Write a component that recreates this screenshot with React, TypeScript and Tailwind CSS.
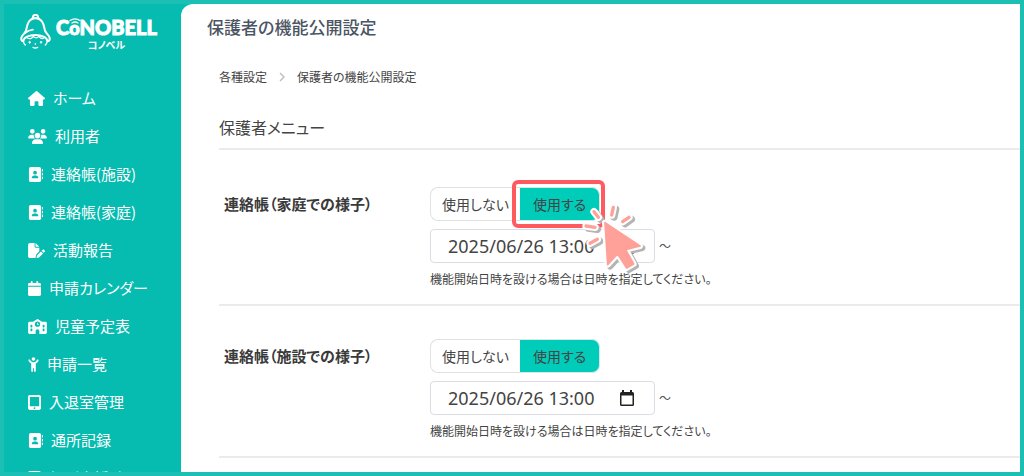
import { useState } from 'react'
import type { IconType } from 'react-icons'
import {
  FaAddressBook,
  FaCalendar,
  FaChildReaching,
  FaFilePen,
  FaHouse,
  FaSchool,
  FaTabletScreenButton,
  FaUsers,
} from 'react-icons/fa6'

type MenuItem = { label: string; icon: IconType; width: string }

// widths keep every glyph at the same height
const menuItems: MenuItem[] = [
  { label: 'ホーム', icon: FaHouse, width: 'w-[17px]' },
  { label: '利用者', icon: FaUsers, width: 'w-[19px]' },
  { label: '連絡帳(施設)', icon: FaAddressBook, width: 'w-[15px]' },
  { label: '連絡帳(家庭)', icon: FaAddressBook, width: 'w-[15px]' },
  { label: '活動報告', icon: FaFilePen, width: 'w-[17px]' },
  { label: '申請カレンダー', icon: FaCalendar, width: 'w-[13px]' },
  { label: '児童予定表', icon: FaSchool, width: 'w-[19px]' },
  { label: '申請一覧', icon: FaChildReaching, width: 'w-[11px]' },
  { label: '入退室管理', icon: FaTabletScreenButton, width: 'w-[13px]' },
  { label: '通所記録', icon: FaAddressBook, width: 'w-[15px]' },
  { label: '個別支援計画', icon: FaTabletScreenButton, width: 'w-[13px]' },
]

function BellMark() {
  return (
    <svg
      viewBox="54 40 99 108"
      className="h-9 w-[33px] shrink-0"
      fill="none"
      stroke="white"
      strokeWidth="6"
      strokeLinecap="round"
      strokeLinejoin="round"
      aria-hidden="true"
    >
      <path d="M96 53a8 8 0 1 1 15 0" />
      <path d="M93 55c-15 6-14 22-18 35-3 9-13 13-14 22-1 6 2 9 6 10M114 55c15 6 14 22 18 35 3 9 13 13 14 22 1 6-2 9-6 10" />
      <path d="M93 55c6-3 15-3 21 0" />
      <path d="M72 97c7-6 14-9 24-10" strokeWidth="5" />
      <path d="M67 121c1-11 17-18 36-18s35 7 36 18" />
      <path d="M79 112c7 4 14 2 18-5 5 6 12 6 17 0 4 6 9 8 14 5" strokeWidth="4" />
      <path d="M67 122c1 5 3 8 6 11M139 122c-1 5-3 8-6 11" strokeWidth="4" />
      <path d="M96 140q7 4 14 0" strokeWidth="4" />
      <path d="M103 129v2" strokeWidth="4" />
      <ellipse cx="86" cy="125" rx="2" ry="3" fill="white" strokeWidth="3" />
      <ellipse cx="120" cy="125" rx="2" ry="3" fill="white" strokeWidth="3" />
    </svg>
  )
}

function Logo() {
  return (
    <a href="#" className="flex items-start gap-1 px-[15px] pt-[10px] text-white">
      <BellMark />
      <span className="flex flex-col items-center pt-[2px]">
        <span className="flex items-baseline font-[Lato,sans-serif] text-[20px] leading-[22px] font-black [-webkit-text-stroke:1px_white]">
          C
          <span className="relative text-[18px]">
            o
            <svg
              viewBox="0 0 12 6"
              className="absolute top-px left-0 h-[6px] w-3"
              fill="none"
              stroke="white"
              strokeWidth="1.3"
              strokeLinecap="round"
              aria-hidden="true"
            >
              <path d="M1 2.5Q6-.8 11 2.5M3 5Q6 3 9 5" />
            </svg>
          </span>
          NOBELL
        </span>
        <span className="text-[10px] leading-3 font-bold">コノベル</span>
      </span>
    </a>
  )
}

function Sidebar() {
  return (
    <aside className="w-[177px] shrink-0 bg-[#06bbaf]">
      <Logo />
      <nav className="mt-7 pl-6">
        {menuItems.map(({ label, icon: Icon, width }) => (
          <a
            key={label}
            href="#"
            className="flex h-[38px] items-center gap-2 text-[15px] whitespace-nowrap text-white"
          >
            <Icon className={`h-[15px] shrink-0 ${width}`} />
            {label}
          </a>
        ))}
      </nav>
    </aside>
  )
}

function ClickPointer() {
  const rays = 'M42 41l13 17M100 28l-5 23M128 71l19-13M18 84l27 4M30 136l22-12'
  const arrow = 'M75 74L180 144L137 155L161 198L140 210L113 168L83 200Z'
  return (
    <svg
      viewBox="0 0 210 228"
      className="pointer-events-none absolute top-[11px] left-[60px] z-10 h-[76px] w-[70px]"
      strokeLinecap="round"
      strokeLinejoin="round"
      aria-hidden="true"
    >
      <g fill="#b4b4b4" stroke="#b4b4b4" transform="translate(7 6)">
        <path d={rays} strokeWidth="22" />
        <path d={arrow} strokeWidth="18" />
      </g>
      <g fill="white" stroke="white">
        <path d={rays} strokeWidth="22" />
        <path d={arrow} strokeWidth="18" />
      </g>
      <g fill="#ffa198" stroke="#ffa198">
        <path d={rays} strokeWidth="10" />
        <path d={arrow} strokeWidth="5" />
      </g>
    </svg>
  )
}

type SettingRowProps = { id: string; label: string; highlighted?: boolean }

function SettingRow({ id, label, highlighted = false }: SettingRowProps) {
  const [enabled, setEnabled] = useState(true)
  const [startAt, setStartAt] = useState('2025/06/26 13:00')

  return (
    <section className="flex border-b-2 border-[#ebebeb] pt-[33px] pb-[15px]">
      <h3 className="w-[211px] shrink-0 pl-[5px] text-[15px] leading-[34px] font-bold text-[#3a3a3a]">{label}</h3>
      <div>
        <div className="flex h-[34px] text-[14px] text-[#444]">
          <button
            type="button"
            aria-pressed={!enabled}
            onClick={() => setEnabled(false)}
            className={`w-[90px] rounded-l-lg border border-r-0 border-[#e2e2e2] ${enabled ? 'bg-white' : 'bg-[#00ccba]'}`}
          >
            使用しない
          </button>
          <div className="relative">
            <button
              type="button"
              aria-pressed={enabled}
              onClick={() => setEnabled(true)}
              className={`h-full w-20 rounded-r-lg border border-l-0 border-[#d5e8e6] ${enabled ? 'bg-[#00ccba]' : 'bg-white'}`}
            >
              使用する
            </button>
            {highlighted && (
              <>
                <div className="pointer-events-none absolute -inset-y-[7px] -right-[5px] -left-2 rounded-md border-4 border-[#ff5a5f]" />
                <ClickPointer />
              </>
            )}
          </div>
        </div>
        <div className="mt-2 flex items-center gap-1">
          <div className="flex h-[34px] w-[225px] items-center rounded border border-[#dcdce4] bg-white pr-5 pl-[17px]">
            <input
              id={id}
              type="text"
              aria-label={`${label} 機能開始日時`}
              value={startAt}
              onChange={(e) => setStartAt(e.target.value)}
              className="w-full min-w-0 font-['Noto_Sans',sans-serif] text-[18px] text-[#444] outline-none"
            />
            <svg viewBox="0 0 14 16" className="h-4 w-[14px] shrink-0" aria-hidden="true">
              <path
                fill="#222"
                d="M2 0h2v2h6V0h2v2h.5A1.5 1.5 0 0 1 14 3.500V14.500A1.500 1.500 0 0 1 12.500 16h-11A1.500 1.500 0 0 1 0 14.500V3.500A1.500 1.500 0 0 1 1.500 2H2zM1.500 5.500v9h11v-9z"
              />
            </svg>
          </div>
          <span className="text-[12px] text-[#555]">～</span>
        </div>
        <p className="mt-[6px] text-[12px] leading-5 text-[#444]">機能開始日時を設ける場合は日時を指定してください。</p>
      </div>
    </section>
  )
}

export default function App() {
  return (
    <div className="flex h-screen overflow-hidden border-4 border-[#1bbfb3] bg-[#06bbaf] font-['Noto_Sans_CJK_JP',sans-serif] [font-feature-settings:'palt']">
      <Sidebar />
      <main className="min-w-0 flex-1 overflow-hidden rounded-tl-xl bg-white">
        <h1 className="px-[26px] pt-[11px] text-[17px] leading-6 font-medium text-[#4b5563]">保護者の機能公開設定</h1>
        <div className="pl-[38px]">
          <nav aria-label="パンくずリスト" className="mt-7 flex items-center gap-[11px] text-[12px] leading-5 text-[#444]">
            <a href="#">各種設定</a>
            <svg viewBox="0 0 8 10" className="h-[10px] w-2" fill="none" stroke="#bbb" strokeWidth="1.3" aria-hidden="true">
              <path d="M2 1l4 4-4 4" />
            </svg>
            <span>保護者の機能公開設定</span>
          </nav>
          <h2 className="mt-7 border-b-2 border-[#ebebeb] pb-[9px] text-[16px] leading-6 text-[#444]">保護者メニュー</h2>
          <div className="pt-1">
            <SettingRow id="home-start" label="連絡帳（家庭での様子）" highlighted />
            <SettingRow id="facility-start" label="連絡帳（施設での様子）" />
          </div>
        </div>
      </main>
    </div>
  )
}
